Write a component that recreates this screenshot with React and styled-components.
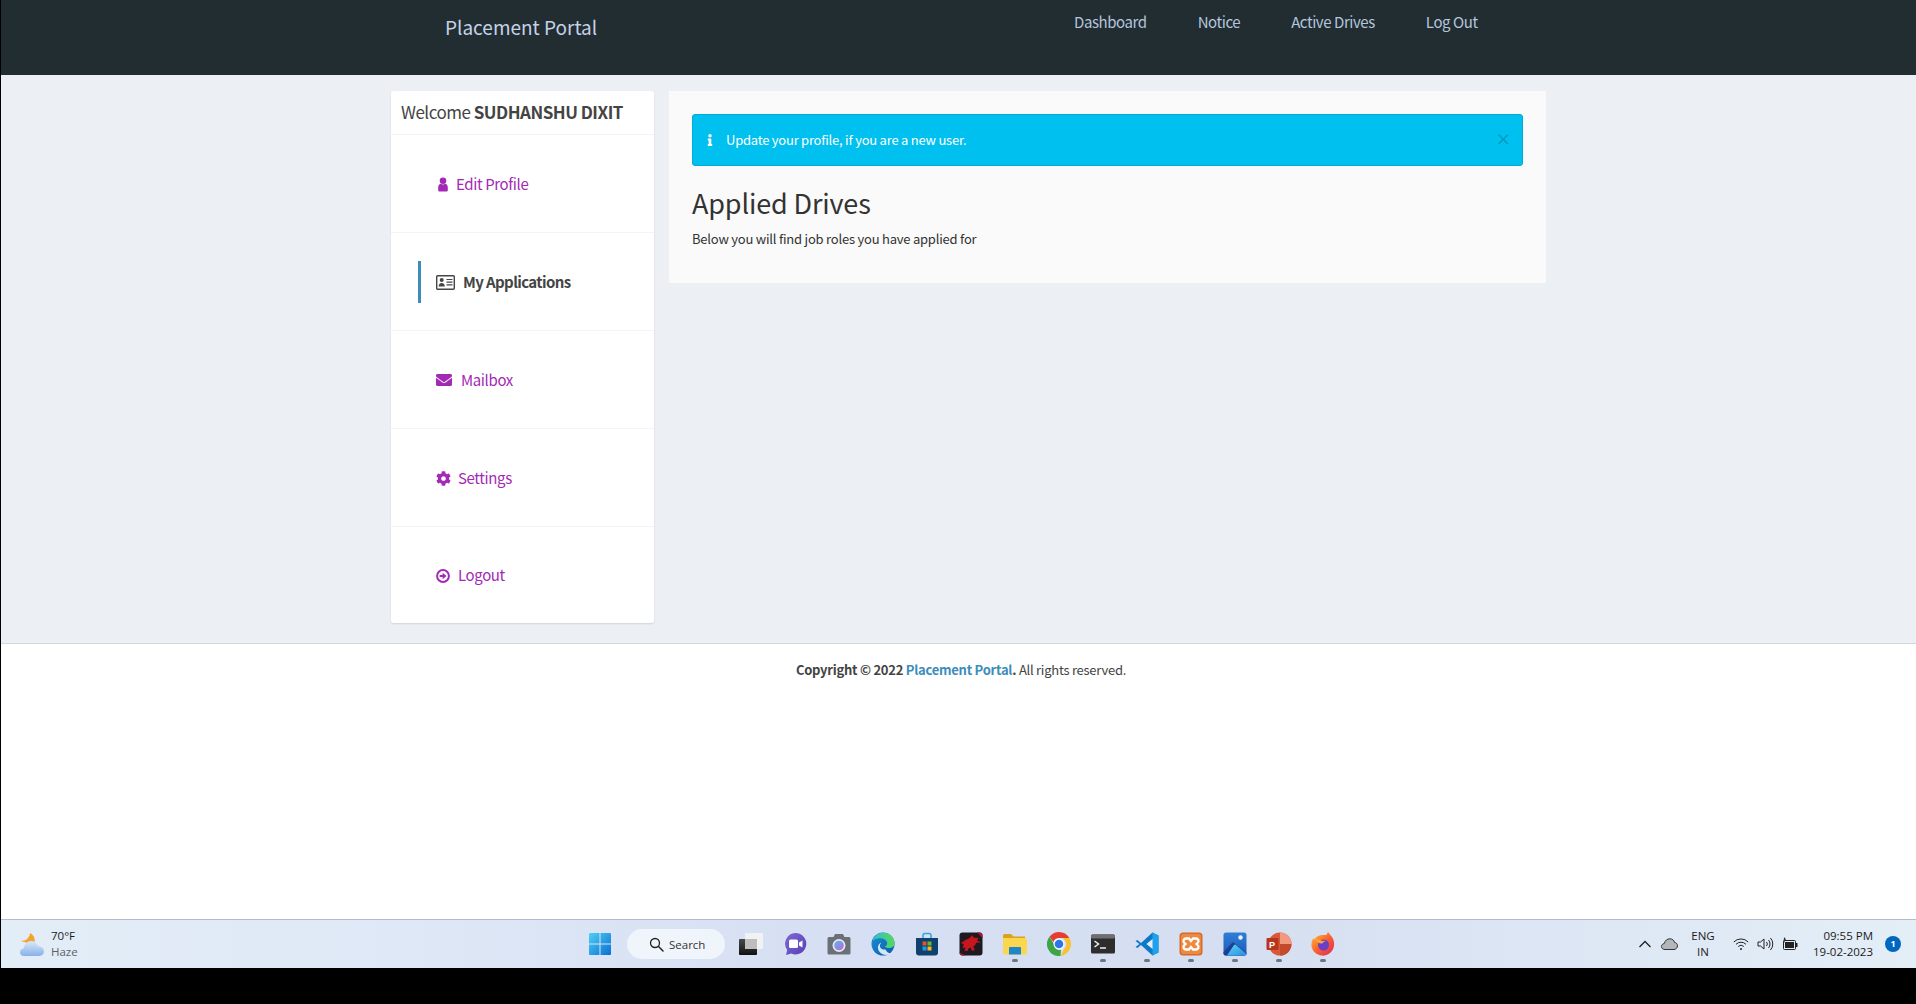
import React from 'react';
import styled, { createGlobalStyle } from 'styled-components';
import { FaEnvelope, FaCog, FaInfo } from 'react-icons/fa';

const GlobalStyle = createGlobalStyle`
  html, body {
    margin: 0;
    padding: 0;
    background: #000;
  }
  * {
    box-sizing: border-box;
  }
`;

const SANS = `"Noto Sans CJK SC", "Source Sans Pro", "Open Sans", sans-serif`;
const PURPLE = '#a32ab4';

const Page = styled.div`
  width: 1916px;
  height: 1004px;
  overflow: hidden;
  padding-left: 1px;
  background: #000;
  font-family: ${SANS};
  display: flex;
  flex-direction: column;
`;

const Header = styled.header`
  height: 75px;
  flex: none;
  background: #222d32;
  display: flex;
  padding-left: 444px;
`;

const Brand = styled.div`
  width: 629px;
  padding-top: 13px;
  font-size: 19px;
  line-height: 28px;
  color: #c4d2e6;
`;

const Nav = styled.nav`
  display: flex;
  gap: 51px;
  padding-top: 11px;
`;

const NavLink = styled.a`
  font-size: 15px;
  letter-spacing: -0.42px;
  line-height: 22px;
  color: #b4c5dc;
`;

const Content = styled.main`
  height: 569px;
  flex: none;
  background: #ecf0f5;
  border-bottom: 1px solid #d2d6de;
  padding: 16px 0 0 390px;
  display: flex;
  align-items: flex-start;
  gap: 15px;
`;

const Sidebar = styled.aside`
  width: 263px;
  height: 532px;
  background: #fff;
  border-radius: 3px;
  box-shadow: 0 1px 2px rgba(0, 0, 0, 0.12);
`;

const Welcome = styled.div`
  height: 44px;
  padding-left: 10px;
  font-size: 17px;
  letter-spacing: -0.5px;
  line-height: 41px;
  color: #444;
  border-bottom: 1px solid #f4f4f4;
  b {
    font-weight: 700;
  }
`;

const MenuItem = styled.a`
  height: ${(p) => (p.$last ? 96 : 98)}px;
  display: flex;
  align-items: center;
  padding-left: 27px;
  border-bottom: ${(p) => (p.$last ? 'none' : '1px solid #f4f4f4')};
`;

const MenuInner = styled.span`
  height: 42px;
  display: flex;
  align-items: center;
  gap: ${(p) => p.$gap}px;
  padding-left: 15px;
  border-left: 3px solid ${(p) => (p.$active ? '#3c8dbc' : 'transparent')};
  color: ${(p) => (p.$active ? '#444' : PURPLE)};
  font-size: 15px;
  letter-spacing: ${(p) => (p.$active ? -0.6 : -0.38)}px;
  line-height: 22px;
  font-weight: ${(p) => (p.$active ? 600 : 400)};
  svg {
    flex: none;
    margin-top: 1px;
  }
`;

const Panel = styled.section`
  width: 877px;
  height: 192px;
  background: #fafafa;
  padding: 23px;
`;

const Alert = styled.div`
  height: 52px;
  background: #00c0ef;
  border: 1px solid #00acd6;
  border-radius: 3px;
  display: flex;
  align-items: center;
  padding: 0 11px;
  color: #fff;
  font-size: 13px;
  letter-spacing: -0.23px;
  line-height: 20px;
  gap: 10px;
`;

const AlertText = styled.span`
  flex: 1;
`;

const AlertClose = styled.span`
  font-size: 16px;
  line-height: 18px;
  font-weight: 700;
  color: rgba(0, 0, 0, 0.2);
  margin-top: -4px;
`;

const Title = styled.h1`
  margin: 19px 0 0;
  font-size: 27px;
  letter-spacing: -0.15px;
  line-height: 36px;
  font-weight: 400;
  color: #333;
`;

const Lead = styled.p`
  margin: 8px 0 0;
  font-size: 13px;
  letter-spacing: -0.22px;
  line-height: 20px;
  color: #333;
`;

const Footer = styled.footer`
  flex: none;
  height: 275px;
  background: #fff;
  padding: 16px 0 0 5px;
  text-align: center;
  font-size: 13px;
  letter-spacing: -0.25px;
  line-height: 20px;
  color: #444;
  b {
    font-weight: 700;
  }
`;

const FooterLink = styled.a`
  color: #3c8dbc;
  font-weight: 700;
`;

const Taskbar = styled.div`
  flex: none;
  height: 49px;
  border-top: 1px solid #b6bdca;
  background: linear-gradient(90deg, #e3edf7 0%, #dfe8f6 20%, #d6dff3 45%, #d5dff1 65%, #dee8f5 85%, #e3eef7 100%);
  display: flex;
  align-items: center;
  font-family: "Open Sans", "Noto Sans", sans-serif;
  color: #1b1b1b;
`;

const Weather = styled.div`
  width: 577px;
  flex: none;
  display: flex;
  align-items: center;
  gap: 6px;
  padding-left: 19px;
`;

const WeatherText = styled.div`
  font-size: 11.5px;
  line-height: 16px;
`;

const WeatherSub = styled.div`
  color: #5b6168;
`;

const AppSlot = styled.div`
  width: 44px;
  height: 48px;
  flex: none;
  position: relative;
  display: flex;
  align-items: center;
  justify-content: center;
  &::after {
    content: '';
    display: ${(p) => (p.$running ? 'block' : 'none')};
    position: absolute;
    left: 19px;
    bottom: 6px;
    width: 6px;
    height: 3px;
    border-radius: 2px;
    background: #6e7580;
  }
`;

const SearchPill = styled.div`
  width: 98px;
  height: 30px;
  flex: none;
  margin: 0 4px 0 5px;
  border-radius: 15px;
  background: #f0f5fc;
  display: flex;
  align-items: center;
  padding-left: 22px;
  gap: 5px;
  font-size: 11.5px;
  color: #333;
`;

const Tray = styled.div`
  margin-left: auto;
  display: flex;
  align-items: center;
  padding-right: 15px;
`;

const TraySlot = styled.div`
  width: 24px;
  height: 30px;
  display: flex;
  align-items: center;
  justify-content: center;
`;

const Lang = styled.div`
  width: 44px;
  margin-right: 4px;
  text-align: center;
  font-size: 11.5px;
  line-height: 16px;
`;

const Clock = styled.div`
  width: 72px;
  text-align: right;
  font-size: 11.5px;
  line-height: 16px;
  white-space: nowrap;
`;

const Badge = styled.div`
  width: 16px;
  height: 16px;
  margin-left: 12px;
  border-radius: 50%;
  background: #0067c0;
  color: #fff;
  font-size: 9px;
  font-weight: 700;
  line-height: 16px;
  text-align: center;
`;

const UserIcon = () => (
  <svg width="15" height="15" viewBox="0 0 15 15">
    <circle cx="7" cy="3.800" r="3.300" fill={PURPLE} />
    <path d="M2.200 13.200V10.500C2.200 8.300 3.500 7 5 6.800c1.200.8 2.800.8 4 0 1.500.2 2.800 1.500 2.800 3.700v2.700c0 .9-.7 1.300-1.500 1.300H3.700c-.8 0-1.500-.4-1.500-1.300z" fill={PURPLE} />
  </svg>
);

const IdCardIcon = () => (
  <svg width="19" height="15" viewBox="0 0 19 15">
    <rect x=".7" y=".7" width="17.600" height="13.600" rx="1" fill="none" stroke="#444" strokeWidth="1.400" />
    <circle cx="5.700" cy="5" r="2" fill="#444" />
    <path d="M2.600 11.500c0-2.200 1.200-3.500 3.100-3.500s3.100 1.300 3.100 3.500z" fill="#444" />
    <path d="M10.500 4.500h6M10.500 7.200h6M10.500 9.900h6" stroke="#444" strokeWidth="1.200" />
  </svg>
);

const LogoutIcon = () => (
  <svg width="14" height="14" viewBox="0 0 14 14">
    <circle cx="7" cy="7" r="5.900" fill="none" stroke={PURPLE} strokeWidth="2" />
    <path d="M3.600 6h3V3.700L10.500 7 6.600 10.300V8h-3z" fill={PURPLE} />
  </svg>
);

const WeatherIcon = () => (
  <svg width="25" height="25" viewBox="0 0 25 25">
    <defs>
      <linearGradient id="cloudFill" x1="0" y1="0" x2="0" y2="1">
        <stop offset="0" stopColor="#dbe8f8" />
        <stop offset="1" stopColor="#86b2e8" />
      </linearGradient>
    </defs>
    <path d="M10 1c4 2 6 6 4 12L1 9c1-.5 4 0 6-2 2-2 3-4 3-6z" fill="#f2a52e" />
    <path d="M4 24c-2.500 0-4-1.500-4-3.700 0-2 1.500-3.500 3.500-3.700C4.500 12 7.500 9 11 9c3.500 0 6 2 7 5.300 3 0 6 2 6 5 0 2.800-2 4.700-5 4.700z" fill="url(#cloudFill)" />
  </svg>
);

const WindowsIcon = () => (
  <svg width="24" height="24" viewBox="0 0 24 24">
    <defs>
      <linearGradient id="winFill" x1="0" y1="0" x2="1" y2="1">
        <stop offset="0" stopColor="#4fd0f7" />
        <stop offset="1" stopColor="#0a6fd0" />
      </linearGradient>
    </defs>
    <path d="M1 2a1 1 0 0 1 1-1h9.500v10.500H1zM12.500 1H22a1 1 0 0 1 1 1v9.500H12.500zM1 12.500h10.500V23H2a1 1 0 0 1-1-1zM12.500 12.500H23V22a1 1 0 0 1-1 1h-9.500z" fill="url(#winFill)" />
  </svg>
);

const SearchIcon = () => (
  <svg width="15" height="15" viewBox="0 0 15 15">
    <circle cx="6" cy="6" r="4.500" fill="none" stroke="#222" strokeWidth="1.300" />
    <path d="M9.300 9.300 14 14" stroke="#222" strokeWidth="1.500" strokeLinecap="round" />
  </svg>
);

const TaskViewIcon = () => (
  <svg width="26" height="24" viewBox="0 0 26 24">
    <defs>
      <linearGradient id="tvDark" x1="0" y1="0" x2="0" y2="1">
        <stop offset="0" stopColor="#4a4a4a" />
        <stop offset="1" stopColor="#111" />
      </linearGradient>
    </defs>
    <rect x="1" y="7" width="18" height="16" rx="1" fill="url(#tvDark)" />
    <rect x="7" y="1" width="18" height="16" rx="1" fill="#f4f4f4" fillOpacity="0.9" />
    <rect x="7" y="7" width="12" height="10" fill="#bdbdbd" />
  </svg>
);

const TeamsIcon = () => (
  <svg width="24" height="24" viewBox="0 0 24 24">
    <defs>
      <linearGradient id="teamsFill" x1="0" y1="0" x2="1" y2="1">
        <stop offset="0" stopColor="#7b6ad8" />
        <stop offset="1" stopColor="#5a3fb0" />
      </linearGradient>
    </defs>
    <path d="M12.500 1a10.700 10.700 0 1 1-4.200 20.500L3 23l1.200-5A10.700 10.700 0 0 1 12.500 1z" fill="url(#teamsFill)" />
    <rect x="6" y="7.500" width="9" height="8.500" rx="1.500" fill="#fff" />
    <path d="M16 10.500l3.500-2v7l-3.500-2z" fill="#fff" />
  </svg>
);

const CameraIcon = () => (
  <svg width="24" height="22" viewBox="0 0 24 22">
    <defs>
      <linearGradient id="lensFill" x1="0" y1="0" x2="1" y2="1">
        <stop offset="0" stopColor="#5bb5f0" />
        <stop offset="1" stopColor="#b868d8" />
      </linearGradient>
    </defs>
    <path d="M2 4h4.500L8 1h8l1.500 3H22a1.500 1.500 0 0 1 1.500 1.500V20a1.500 1.500 0 0 1-1.500 1.500H2A1.500 1.500 0 0 1 .5 20V5.500A1.500 1.500 0 0 1 2 4z" fill="#6b7078" />
    <circle cx="12" cy="12.500" r="6.500" fill="#e6e8ee" />
    <circle cx="12" cy="12.500" r="4.800" fill="url(#lensFill)" />
  </svg>
);

const EdgeIcon = () => (
  <svg width="24" height="24" viewBox="0 0 24 24">
    <defs>
      <linearGradient id="edgeBlue" x1="0" y1="0" x2="1" y2="1">
        <stop offset="0" stopColor="#1a8fd8" />
        <stop offset="1" stopColor="#0c5ba8" />
      </linearGradient>
      <linearGradient id="edgeGreen" x1="0" y1="0" x2="1" y2="0">
        <stop offset="0" stopColor="#30c0c8" />
        <stop offset="1" stopColor="#58d85c" />
      </linearGradient>
    </defs>
    <circle cx="12" cy="12" r="11.500" fill="url(#edgeBlue)" />
    <path d="M2 7C5 1 12-.5 17 1.500c4 1.600 6.500 5.500 6.500 9.800 0 3.200-2.500 4.700-5.500 4.700-2 0-3.600-.6-4.300-1.500 2-.8 2.800-2.400 2.300-4.300C15 7.500 12 6 8.500 6.300 6 6.500 3.800 7 2 8.500z" fill="url(#edgeGreen)" />
    <path d="M14.500 17.500c-4 .5-6-2-5.500-4.500.3-1.200 1-2.200 2-2.500-2.500.5-4.500 3-4 6 .5 3.500 4 6.500 8 6.500 2 0 4-.8 5.500-2-2 .6-4.500-.2-6-3.500z" fill="#e8f4fb" fillOpacity="0.9" />
  </svg>
);

const StoreIcon = () => (
  <svg width="24" height="24" viewBox="0 0 24 24">
    <path d="M8 6V3.500A2 2 0 0 1 10 1.500h4a2 2 0 0 1 2 2V6" fill="none" stroke="#2aa5e8" strokeWidth="1.500" />
    <path d="M1 6h22v14.500a3 3 0 0 1-3 3H4a3 3 0 0 1-3-3z" fill="#10406e" />
    <rect x="7.500" y="9.500" width="4" height="4" fill="#e8502a" />
    <rect x="12.500" y="9.500" width="4" height="4" fill="#6cb52c" />
    <rect x="7.500" y="14.500" width="4" height="4" fill="#1f9ae0" />
    <rect x="12.500" y="14.500" width="4" height="4" fill="#f5b91e" />
  </svg>
);

const DragonIcon = () => (
  <svg width="24" height="24" viewBox="0 0 24 24">
    <rect x=".5" y=".5" width="23" height="23" rx="3" fill="#1e1a20" />
    <path d="M23.500 6V3.500a3 3 0 0 0-3-3H18zM.5 20.500a3 3 0 0 0 3 3H7z" fill="#a3182a" />
    <path d="M1.500 11c3-1 4.500-3.500 8.500-4.500L13.500 3l1 2.500 5 .5-1.500 2.500 4 2-5 .3c0 1.700-1.500 3-3 4 1.500 1 1.500 2.500 1.500 3.500l-2.500.5-1.500-3.300-2 1-1 2.500-3-.3 1-3.200-3 .5 1-3C6 12 3.500 12 1.500 11z" fill="#c8161e" />
  </svg>
);

const FolderIcon = () => (
  <svg width="24" height="22" viewBox="0 0 24 22">
    <path d="M0 2.500A1.500 1.500 0 0 1 1.500 1H8l2.500 2.500H22V9H0z" fill="#dca21e" />
    <path d="M0 5h22.500A1.500 1.500 0 0 1 24 6.500V20a1.500 1.500 0 0 1-1.500 1.500h-21A1.500 1.500 0 0 1 0 20z" fill="#fbd64f" />
    <path d="M6 15a1 1 0 0 1 1-1h10a1 1 0 0 1 1 1v6.500H6z" fill="#1f86c8" />
  </svg>
);

const ChromeIcon = () => (
  <svg width="24" height="24" viewBox="0 0 24 24">
    <path d="M12 0a12 12 0 0 1 10.400 6H12a6 6 0 0 0-5.600 3.900L2.500 4.700A12 12 0 0 1 12 0z" fill="#e53e30" />
    <path d="M22.400 6a12 12 0 0 1-8.900 17.900l4-7.300A6 6 0 0 0 17 7.500L16 6z" fill="#fbc02d" />
    <path d="M2.500 4.700l5 8.300A5 5 0 0 0 14 17.800l-.5 6.100A12 12 0 0 1 2.500 4.700z" fill="#3da447" />
    <circle cx="12" cy="12" r="5.500" fill="#fff" />
    <circle cx="12" cy="12" r="4.300" fill="#2b78e4" />
  </svg>
);

const TerminalIcon = () => (
  <svg width="24" height="20" viewBox="0 0 24 20">
    <rect width="24" height="19" y=".5" rx="1.500" fill="#2d2d2d" />
    <rect width="24" height="4" y=".5" rx="1.500" fill="#6f6f6f" />
    <path d="M3.500 7l4 3-4 3" fill="none" stroke="#eee" strokeWidth="1.500" />
    <path d="M9 14h6" stroke="#eee" strokeWidth="1.500" />
  </svg>
);

const VsCodeIcon = () => (
  <svg width="24" height="24" viewBox="0 0 24 24">
    <path d="M17.500.500 23.500 3.500v17l-6 3L6 13l-3.600 3L.5 15l4-3-4-3 1.900-1L6 11z" fill="#0a7ac6" />
    <path d="M17.500.500 23.500 3.500v17l-6 3V17l-6-5 6-5z" fill="#21a0ee" />
    <path d="M17.500 7v10l-6-5z" fill="#e3ecf7" />
  </svg>
);

const XamppIcon = () => (
  <svg width="24" height="24" viewBox="0 0 24 24">
    <rect x=".5" y=".5" width="23" height="23" rx="3.500" fill="#d8692a" />
    <rect x="2" y="2" width="20" height="20" rx="2" fill="#ee8a3e" />
    <path d="M7 6.500h3l2 2.500 2-2.500h3a2.500 2.500 0 0 1 2 4L17.500 12l1.500 1.500a2.500 2.500 0 0 1-2 4h-3L12 15l-2 2.500H7a2.500 2.500 0 0 1-2-4L6.500 12 5 10.500a2.500 2.500 0 0 1 2-4z" fill="none" stroke="#fff" strokeWidth="2.300" />
  </svg>
);

const PhotosIcon = () => (
  <svg width="24" height="24" viewBox="0 0 24 24">
    <defs>
      <linearGradient id="photoSky" x1="0" y1="0" x2="0" y2="1">
        <stop offset="0" stopColor="#2f7fd8" />
        <stop offset="1" stopColor="#1f58b0" />
      </linearGradient>
      <linearGradient id="photoHill" x1="0" y1="0" x2="1" y2="1">
        <stop offset="0" stopColor="#58d4f5" />
        <stop offset="1" stopColor="#2a8de0" />
      </linearGradient>
    </defs>
    <rect x=".5" y=".5" width="23" height="23" rx="2.500" fill="url(#photoSky)" />
    <circle cx="17.500" cy="5.500" r="2.200" fill="#e8f3fb" />
    <path d="M.5 20 10 10l13.500 11v.5a2 2 0 0 1-2 2h-19a2 2 0 0 1-2-2z" fill="#1b3f96" />
    <path d="M4 23.500 11 13c.5-.7 1.500-.7 2 0l10.500 9a2 2 0 0 1-2 1.500z" fill="url(#photoHill)" />
  </svg>
);

const PptLetter = styled.text`
  font-family: "Liberation Sans", sans-serif;
  font-size: 9px;
  font-weight: 700;
  fill: #fff;
`;

const PowerPointIcon = () => (
  <svg width="26" height="24" viewBox="0 0 26 24">
    <circle cx="14" cy="12" r="11.500" fill="#d9573a" />
    <path d="M14 .5A11.500 11.500 0 0 1 25.500 12H14z" fill="#f19a80" />
    <path d="M14 12h11.500A11.500 11.500 0 0 1 14 23.500z" fill="#c44a2c" />
    <rect x=".5" y="6" width="12" height="12" rx="1" fill="#b7361b" />
    <PptLetter x="3" y="15.500">P</PptLetter>
  </svg>
);

const FirefoxIcon = () => (
  <svg width="24" height="24" viewBox="0 0 24 24">
    <defs>
      <linearGradient id="foxFill" x1="0" y1="0" x2="1" y2="1">
        <stop offset="0" stopColor="#ffc43a" />
        <stop offset=".5" stopColor="#f9632f" />
        <stop offset="1" stopColor="#e0245e" />
      </linearGradient>
    </defs>
    <path d="M12 3c2 0 3 0 4-.5.3-1 .5-2 1-2.500 1 2 4.500 4.500 5.500 8 1 3.200 1 8-2 11.500a11.500 11.500 0 0 1-20-5C.2 11 1 8 2.500 6l.5 1.500C5 5 8 3 12 3z" fill="url(#foxFill)" />
    <circle cx="12.500" cy="13" r="5.500" fill="#6b3fc4" />
    <path d="M4 7c2 0 4.500.5 7 2 1-.5 2.500-.5 3.500.5-2 0-3 1-3 2C9 12 6 11 4 7z" fill="#ffa62e" />
  </svg>
);

const WifiIcon = () => (
  <svg width="16" height="14" viewBox="0 0 16 14" fill="none" stroke="#222" strokeWidth="1">
    <path d="M.8 5a10 10 0 0 1 14.400 0M3 7.300a7 7 0 0 1 10 0M5.200 9.500a4 4 0 0 1 5.600 0" />
    <circle cx="8" cy="12" r="1" fill="#222" stroke="none" />
  </svg>
);

const SpeakerIcon = () => (
  <svg width="17" height="14" viewBox="0 0 17 14" fill="none" stroke="#222" strokeWidth="1">
    <path d="M1 5v4h2.500L7 12V2L3.500 5z" />
    <path d="M9.500 5a3 3 0 0 1 0 4M11.500 3a6 6 0 0 1 0 8M13.500 1a9 9 0 0 1 0 12" />
  </svg>
);

const BatteryIcon = () => (
  <svg width="17" height="14" viewBox="0 0 17 14">
    <rect x="2.500" y="3.500" width="12" height="9" rx="1" fill="none" stroke="#222" />
    <rect x="4" y="5" width="9" height="6" fill="#222" />
    <rect x="15" y="6" width="1.500" height="4" fill="#222" />
    <path d="M3 5.500 3.500.8l1 2.700h3" fill="none" stroke="#222" strokeWidth="1" />
  </svg>
);

const ChevronIcon = () => (
  <svg width="14" height="10" viewBox="0 0 14 10">
    <path d="M1.500 8 7 2.500 12.500 8" fill="none" stroke="#222" strokeWidth="1.300" />
  </svg>
);

const CloudIcon = () => (
  <svg width="17" height="12" viewBox="0 0 17 12">
    <path d="M4 11.500c-2 0-3.500-1.200-3.500-3 0-1.600 1.200-2.800 2.800-3C4 2.500 6.300.8 8.800.8c2.500 0 4.300 1.500 4.800 3.700 1.700.2 2.900 1.500 2.900 3.300s-1.500 3.700-3.500 3.700z" fill="#b3b6ba" stroke="#333" strokeWidth="1" />
  </svg>
);

const MENU = [
  { label: 'Edit Profile', icon: <UserIcon />, gap: 5 },
  { label: 'My Applications', icon: <IdCardIcon />, gap: 8, active: true },
  { label: 'Mailbox', icon: <FaEnvelope size={16} />, gap: 9 },
  { label: 'Settings', icon: <FaCog size={15} />, gap: 7 },
  { label: 'Logout', icon: <LogoutIcon />, gap: 8, last: true },
];

const APPS = [
  { key: 'teams', icon: <TeamsIcon /> },
  { key: 'camera', icon: <CameraIcon /> },
  { key: 'edge', icon: <EdgeIcon /> },
  { key: 'store', icon: <StoreIcon /> },
  { key: 'dragon', icon: <DragonIcon /> },
  { key: 'folder', icon: <FolderIcon />, running: true },
  { key: 'chrome', icon: <ChromeIcon /> },
  { key: 'terminal', icon: <TerminalIcon />, running: true },
  { key: 'vscode', icon: <VsCodeIcon />, running: true },
  { key: 'xampp', icon: <XamppIcon />, running: true },
  { key: 'photos', icon: <PhotosIcon />, running: true },
  { key: 'ppt', icon: <PowerPointIcon />, running: true },
  { key: 'firefox', icon: <FirefoxIcon />, running: true },
];

const App = () => (
  <Page>
    <GlobalStyle />
    <Header>
      <Brand>Placement Portal</Brand>
      <Nav>
        <NavLink>Dashboard</NavLink>
        <NavLink>Notice</NavLink>
        <NavLink>Active Drives</NavLink>
        <NavLink>Log Out</NavLink>
      </Nav>
    </Header>
    <Content>
      <Sidebar>
        <Welcome>
          Welcome <b>SUDHANSHU DIXIT</b>
        </Welcome>
        {MENU.map((item) => (
          <MenuItem key={item.label} $last={item.last}>
            <MenuInner $active={item.active} $gap={item.gap}>
              {item.icon}
              {item.label}
            </MenuInner>
          </MenuItem>
        ))}
      </Sidebar>
      <Panel>
        <Alert>
          <FaInfo size={12} />
          <AlertText>Update your profile, if you are a new user.</AlertText>
          <AlertClose>×</AlertClose>
        </Alert>
        <Title>Applied Drives</Title>
        <Lead>Below you will find job roles you have applied for</Lead>
      </Panel>
    </Content>
    <Footer>
      <b>
        Copyright © 2022 <FooterLink>Placement Portal</FooterLink>.
      </b>{' '}
      All rights reserved.
    </Footer>
    <Taskbar>
      <Weather>
        <WeatherIcon />
        <WeatherText>
          70°F
          <WeatherSub>Haze</WeatherSub>
        </WeatherText>
      </Weather>
      <AppSlot>
        <WindowsIcon />
      </AppSlot>
      <SearchPill>
        <SearchIcon />
        Search
      </SearchPill>
      <AppSlot>
        <TaskViewIcon />
      </AppSlot>
      {APPS.map((app) => (
        <AppSlot key={app.key} $running={app.running}>
          {app.icon}
        </AppSlot>
      ))}
      <Tray>
        <TraySlot>
          <ChevronIcon />
        </TraySlot>
        <TraySlot>
          <CloudIcon />
        </TraySlot>
        <Lang>
          ENG
          <br />
          IN
        </Lang>
        <TraySlot>
          <WifiIcon />
        </TraySlot>
        <TraySlot>
          <SpeakerIcon />
        </TraySlot>
        <TraySlot>
          <BatteryIcon />
        </TraySlot>
        <Clock>
          09:55 PM
          <br />
          19-02-2023
        </Clock>
        <Badge>1</Badge>
      </Tray>
    </Taskbar>
  </Page>
);

export default App;
